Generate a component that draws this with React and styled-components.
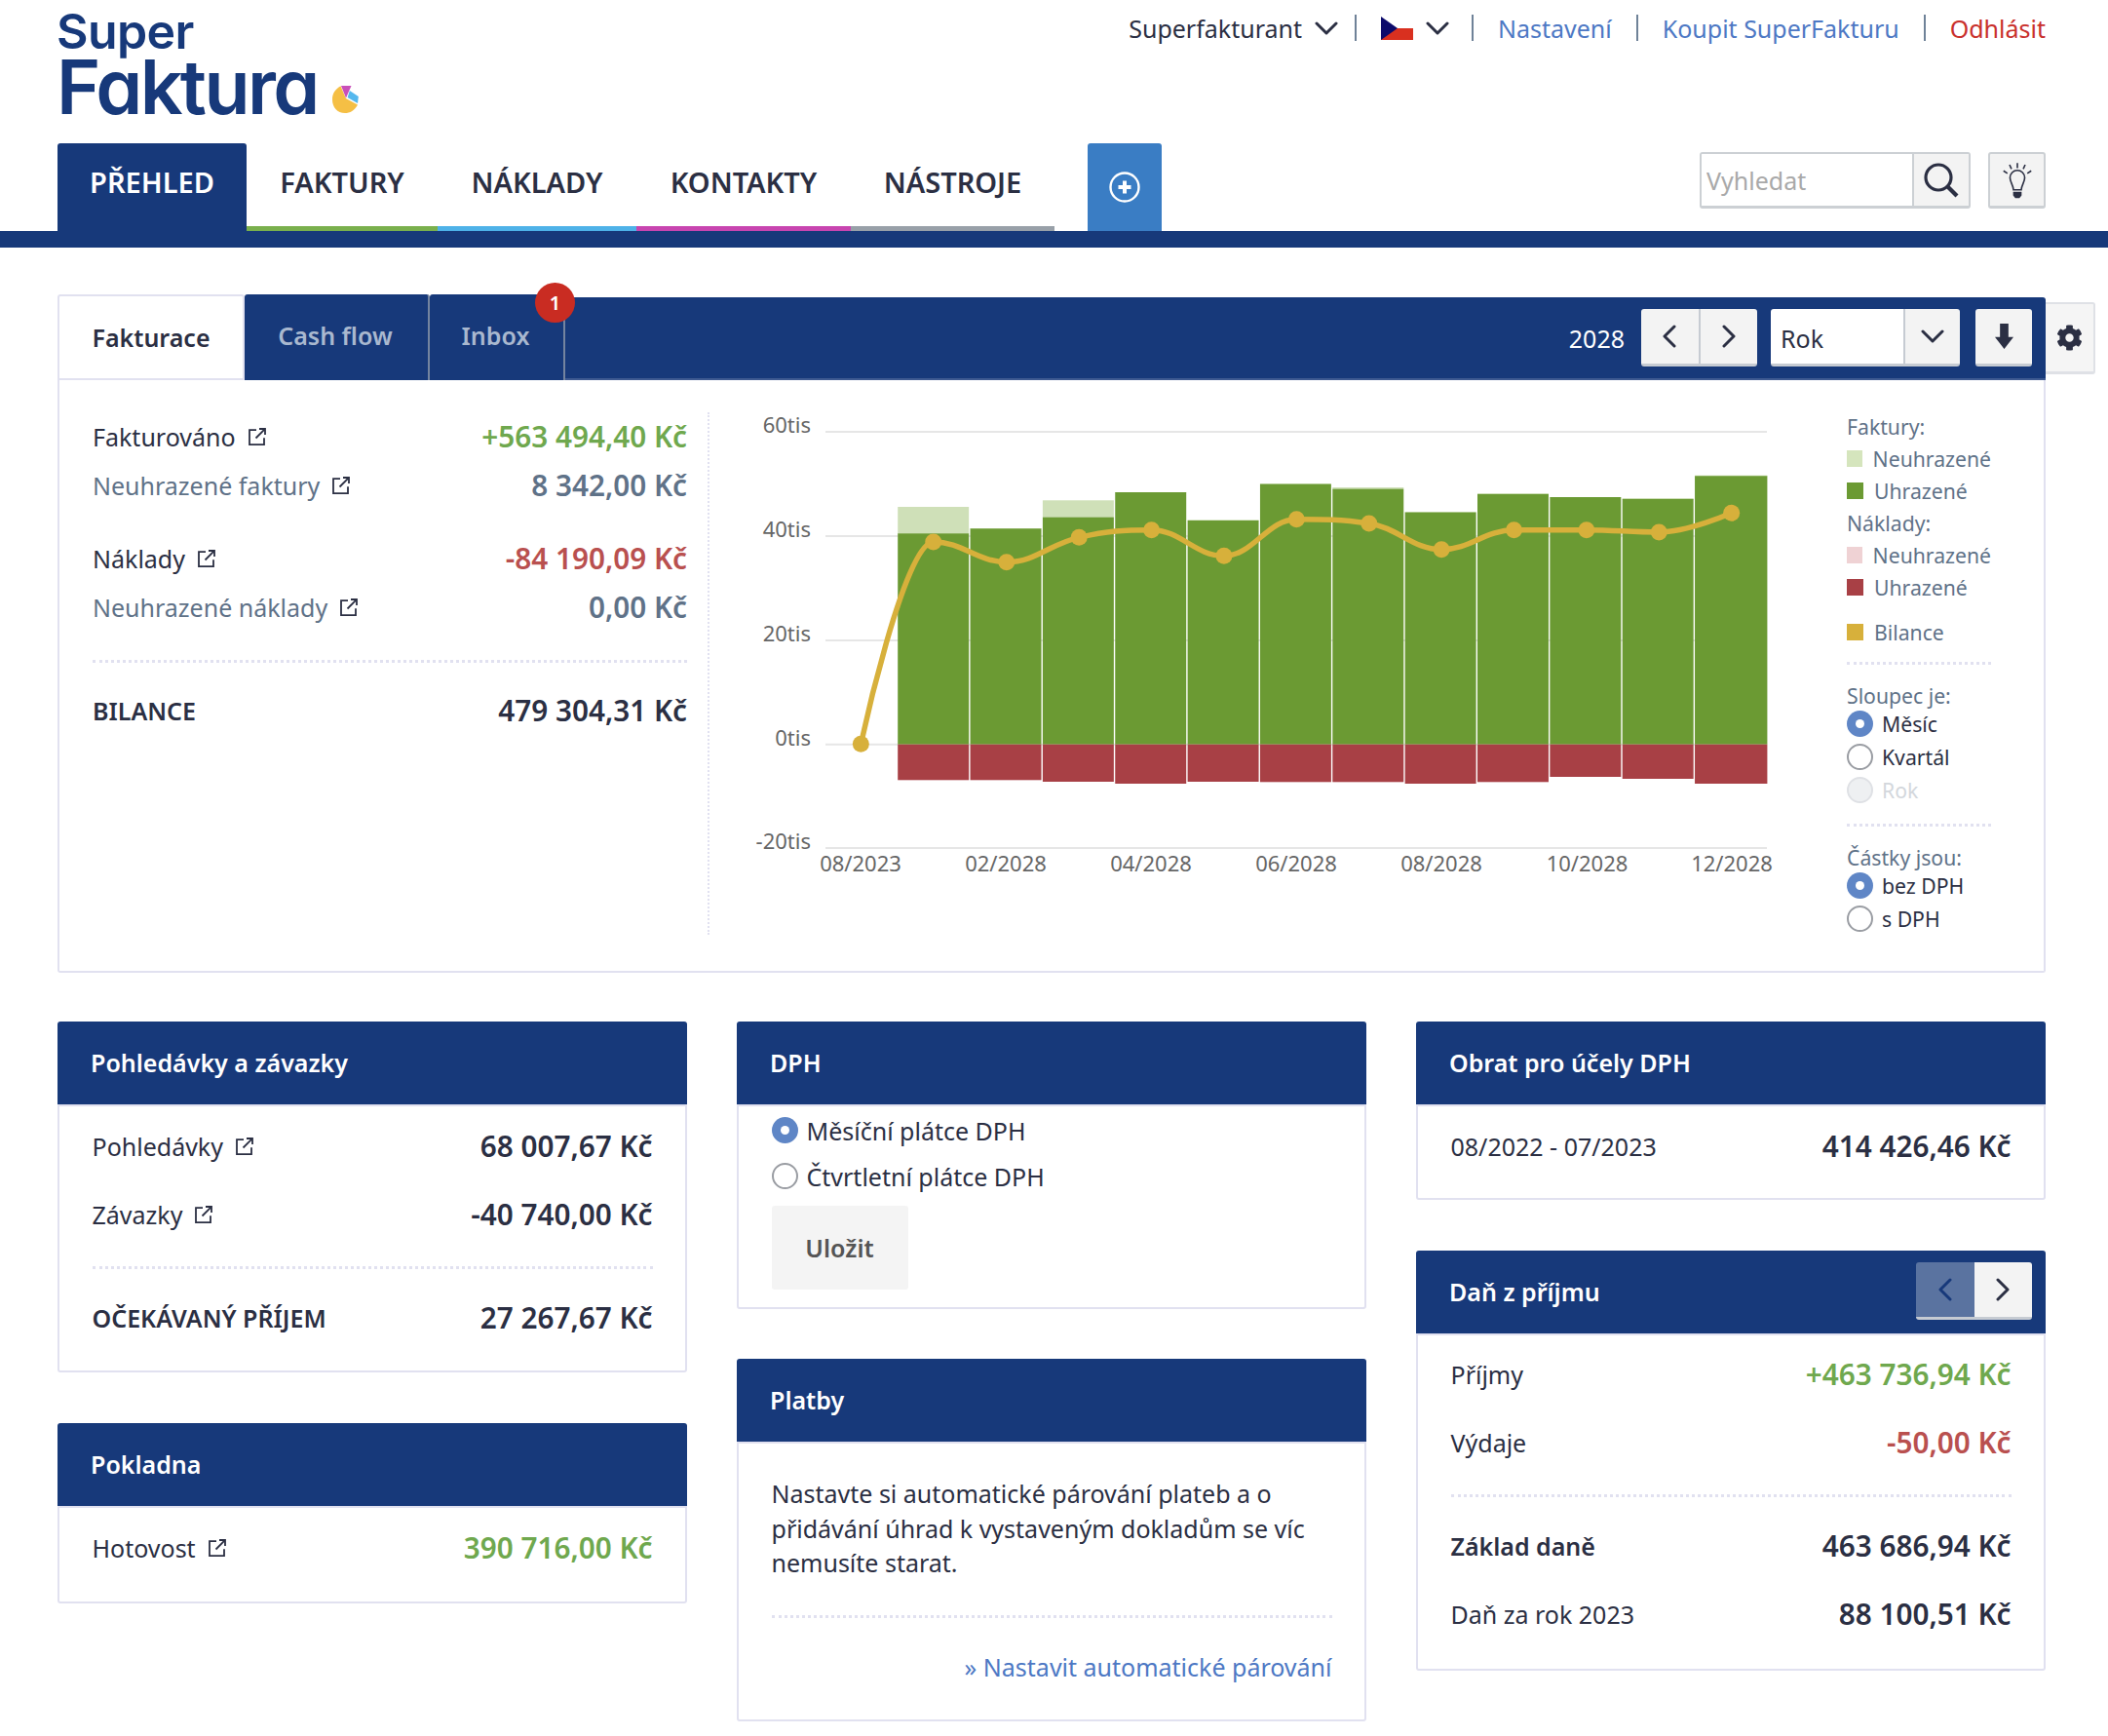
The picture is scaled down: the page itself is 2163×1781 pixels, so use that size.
import React from "react";
import styled, { createGlobalStyle } from "styled-components";
import { FaCog } from "react-icons/fa";

const NAVY = "#17397a";
const INK = "#2b2f43";
const SLATE = "#5f7288";
const LINE = "#e1e1f0";
const FONT = `"Noto Sans", "Open Sans", "Liberation Sans", sans-serif`;

const Global = createGlobalStyle`
  html, body { margin: 0; padding: 0; background: #fff; }
  body { font-family: ${FONT}; color: ${INK}; font-size: 25px; }
  * { box-sizing: border-box; }
`;

const Page = styled.div`
  width: 2163px;
  min-height: 1781px;
  background: #fff;
`;

/* ---------- Header ---------- */
const TopBar = styled.header`
  height: 147px;
  padding: 0 64px 0 58px;
  display: flex;
  justify-content: space-between;
  align-items: flex-start;
`;

const Logo = styled.div`
  display: grid;
  grid-template-columns: auto auto;
  align-items: end;
  column-gap: 14px;
  padding-top: 3px;
  color: ${NAVY};
  font-family: Inter, "Liberation Sans", sans-serif;
  font-feature-settings: "cv11" 1;
  font-weight: 600;
`;
const LogoSuper = styled.div`
  grid-column: 1 / span 2;
  font-size: 50px;
  line-height: 58px;
  letter-spacing: -0.6px;
`;
const LogoFaktura = styled.div`
  font-size: 77px;
  line-height: 56px;
  letter-spacing: -2.6px;
`;
const LogoPie = styled.svg`
  width: 30px;
  height: 30px;
`;

const TopLinks = styled.nav`
  display: flex;
  align-items: center;
  gap: 25px;
  height: 27px;
  margin-top: 15px;
  font-size: 25px;
  white-space: nowrap;
`;
const TopItem = styled.a`
  display: inline-flex;
  align-items: center;
  gap: 13px;
  margin-right: ${(p) => p.$trim || 0}px;
  color: ${(p) => p.$color || INK};
`;
const TopSep = styled.span`
  width: 2px;
  height: 27px;
  background: #6f8298;
`;
const Flag = styled.svg`
  width: 33px;
  height: 24px;
  display: block;
`;

const NavBar = styled.div`
  height: 107px;
  padding: 0 64px 0 59px;
  border-bottom: 17px solid ${NAVY};
  display: flex;
  align-items: stretch;
`;
const NavItem = styled.a`
  width: ${(p) => p.$w}px;
  height: 90px;
  display: flex;
  justify-content: center;
  align-items: flex-start;
  padding-top: 20px;
  line-height: 40px;
  font-size: 29px;
  font-weight: 600;
  text-transform: uppercase;
  color: ${(p) => (p.$active ? "#fff" : INK)};
  background: ${(p) => (p.$active ? NAVY : "transparent")};
  border-bottom: 5px solid ${(p) => p.$line || NAVY};
  border-radius: ${(p) => (p.$active ? "3px 3px 0 0" : "0")};
`;
const AddButton = styled.button`
  width: 76px;
  height: 90px;
  margin-left: 34px;
  border: 0;
  padding: 0;
  border-radius: 3px 3px 0 0;
  background: #3a7dc4;
  display: flex;
  align-items: center;
  justify-content: center;
`;
const NavTools = styled.div`
  margin-left: auto;
  padding-top: 9px;
  display: flex;
  align-items: flex-start;
  gap: 18px;
`;
const SearchBox = styled.div`
  width: 278px;
  height: 58px;
  display: flex;
  border: 2px solid #ccd0d4;
  border-bottom-width: 3px;
  border-radius: 3px;
  overflow: hidden;
`;
const SearchField = styled.input`
  flex: 1;
  min-width: 0;
  border: 0;
  outline: 0;
  padding: 0 0 0 5px;
  font: 25px ${FONT};
  color: ${INK};
  &::placeholder { color: #a9a9a9; opacity: 1; }
`;
const SearchButton = styled.span`
  width: 58px;
  background: #f3f3f3;
  border-left: 2px solid #ccd0d4;
  display: flex;
  align-items: center;
  justify-content: center;
`;
const HintButton = styled.span`
  width: 59px;
  height: 58px;
  background: #f3f3f3;
  border: 2px solid #ccd0d4;
  border-bottom-width: 3px;
  border-radius: 3px;
  display: flex;
  align-items: center;
  justify-content: center;
`;

/* ---------- Overview panel ---------- */
const Main = styled.main`
  padding: 51px 64px 0 59px;
`;
const Overview = styled.section`
  position: relative;
`;
const TabBar = styled.div`
  height: 85px;
  background: ${NAVY};
  border-radius: 0 3px 0 0;
  border-bottom: 2px solid #3f5a91;
  display: flex;
  align-items: flex-end;
`;
const Tab = styled.a`
  position: relative;
  width: ${(p) => p.$w}px;
  height: 88px;
  margin-bottom: -2px;
  display: flex;
  align-items: center;
  justify-content: center;
  padding-bottom: ${(p) => (p.$active ? "0" : "5px")};
  padding-right: ${(p) => (p.$active ? "0" : "2px")};
  font-size: 25px;
  font-weight: 600;
  color: ${(p) => (p.$active ? INK : "#a9b8cf")};
  background: ${(p) => (p.$active ? "#fff" : NAVY)};
  border: ${(p) => (p.$active ? `2px solid ${LINE}` : "0")};
  border-right: ${(p) => (p.$active ? `2px solid ${LINE}` : "2px solid #74849f")};
  border-radius: 3px 3px 0 0;
`;
const Badge = styled.span`
  position: absolute;
  top: -12px;
  right: -12px;
  width: 41px;
  height: 41px;
  border-radius: 50%;
  background: #c92c22;
  color: #fff;
  font-size: 20px;
  font-weight: 600;
  display: flex;
  align-items: center;
  justify-content: center;
`;
const Controls = styled.div`
  margin-left: auto;
  align-self: center;
  padding-right: 14px;
  display: flex;
  align-items: center;
  gap: 14px;
`;
const YearLabel = styled.span`
  color: #fff;
  font-size: 25px;
  margin-right: 3px;
`;
const ButtonGroup = styled.div`
  display: flex;
  width: ${(p) => p.$w || 119}px;
  height: 59px;
  border-radius: 3px;
  overflow: hidden;
  border-bottom: 3px solid #c6cbd2;
`;
const SelectGroup = styled(ButtonGroup)`
  margin-right: 2px;
`;
const IconButton = styled.span`
  flex: 1;
  background: ${(p) => (p.$disabled ? "#5a73a0" : "#f3f3f3")};
  border-left: ${(p) => (p.$divided ? "2px solid #c6cbd2" : "0")};
  display: flex;
  align-items: center;
  justify-content: center;
`;
const SelectText = styled.span`
  width: 136px;
  flex: none;
  background: #fff;
  padding: 4px 0 0 10px;
  display: flex;
  align-items: center;
  font-size: 25px;
  color: ${INK};
`;
const SelectArrow = styled(IconButton)`
  border-left: 2px solid #c6cbd2;
`;
const GearTab = styled.span`
  position: absolute;
  top: 5px;
  right: -51px;
  width: 51px;
  height: 74px;
  background: #f5f5f5;
  border: 2px solid #dfe1e6;
  border-left: 0;
  border-bottom-width: 3px;
  border-radius: 0 3px 3px 0;
  display: flex;
  align-items: center;
  justify-content: center;
  color: ${INK};
`;
const PanelBody = styled.div`
  height: 608px;
  border: 2.5px solid ${LINE};
  border-top: 0;
  border-radius: 0 0 3px 3px;
  display: flex;
  align-items: flex-start;
`;
const Stats = styled.div`
  width: 667px;
  height: 536px;
  margin-top: 33px;
  padding: 0 21px 0 34px;
  border-right: 2px dotted ${LINE};
`;
const StatRow = styled.div`
  height: ${(p) => p.$h || 50}px;
  display: flex;
  align-items: center;
  justify-content: space-between;
  margin-top: ${(p) => p.$gap || 0}px;
  white-space: nowrap;
`;
const StatLabel = styled.span`
  display: inline-flex;
  align-items: center;
  gap: 13px;
  font-size: 25px;
  font-weight: ${(p) => (p.$strong ? 600 : 400)};
  color: ${(p) => (p.$muted ? SLATE : INK)};
`;
const Amount = styled.span`
  font-size: 29.7px;
  font-weight: 600;
  margin-bottom: 2px;
  color: ${(p) => (p.$tone === "green" ? "#6fa84e" : p.$tone === "red" ? "#b9504f" : p.$tone === "slate" ? SLATE : INK)};
`;
const Dotted = styled.div`
  border-top: 3px dotted ${LINE};
  margin: ${(p) => p.$top || 0}px 0 ${(p) => p.$bottom || 0}px;
`;
const ChartSvg = styled.svg`
  flex: none;
  width: 1100px;
  height: 540px;
  margin: 9.5px 0 0 22px;
  display: block;
`;
const AxisText = styled.text`
  font-family: ${FONT};
  font-size: 22px;
  fill: #666;
`;
const Legend = styled.aside`
  width: 148px;
  margin: 31px 0 0 45px;
  font-size: 21.2px;
  color: ${SLATE};
`;
const LegendTitle = styled.div`
  height: 33px;
  line-height: 33px;
  margin-bottom: ${(p) => (p.$tight ? -4 : 0)}px;
`;
const LegendItem = styled.div`
  height: 33px;
  margin-top: ${(p) => p.$gap || 0}px;
  display: flex;
  align-items: center;
  gap: 11px;
  white-space: nowrap;
`;
const Swatch = styled.i`
  width: 17px;
  height: 17px;
  background: ${(p) => p.$c};
`;
const RadioRow = styled.label`
  height: ${(p) => p.$h || 34}px;
  display: flex;
  align-items: center;
  gap: ${(p) => p.$gap || 9}px;
  font-size: ${(p) => p.$size || 21.2}px;
  color: ${(p) => (p.$disabled ? "#d3d7dc" : INK)};
  white-space: nowrap;
`;
const Radio = styled.span`
  flex: none;
  width: 27px;
  height: 27px;
  border-radius: 50%;
  background: ${(p) => (p.$on ? "#5f86c6" : p.$disabled ? "#eef0f2" : "#fff")};
  border: ${(p) => (p.$on ? "0" : p.$disabled ? "2px solid #dfe1e5" : "2px solid #9a9da3")};
  display: flex;
  align-items: center;
  justify-content: center;
  &::after {
    content: "";
    display: ${(p) => (p.$on ? "block" : "none")};
    width: 9px;
    height: 9px;
    border-radius: 50%;
    background: #fff;
  }
`;

/* ---------- Cards ---------- */
const CardGrid = styled.div`
  margin-top: 50px;
  display: grid;
  grid-template-columns: repeat(3, 646px);
  column-gap: 51px;
  align-items: start;
`;
const Column = styled.div`
  display: flex;
  flex-direction: column;
  gap: ${(p) => p.$gap || 52}px;
`;
const Card = styled.article`
  display: flex;
  flex-direction: column;
`;
const CardHead = styled.header`
  height: 85px;
  padding: 0 14px 2px 34px;
  background: ${NAVY};
  border-radius: 3px 3px 0 0;
  display: flex;
  align-items: center;
  justify-content: space-between;
  color: #fff;
  font-size: 25px;
  font-weight: 600;
`;
const CardBody = styled.div`
  border: 2.5px solid ${LINE};
  border-radius: 0 0 3px 3px;
  padding: ${(p) => p.$pad || "6px 33.5px 19px"};
`;
const ValueRow = styled.div`
  height: 70px;
  display: flex;
  align-items: center;
  justify-content: space-between;
  white-space: nowrap;
`;
const SaveButton = styled.button`
  display: block;
  width: 140px;
  height: 86px;
  margin-top: 7px;
  border: 0;
  border-radius: 3px;
  background: #f4f4f4;
  color: #555;
  font: 600 25px ${FONT};
`;
const Paragraph = styled.p`
  margin: 0;
  width: 574px;
  line-height: 35.7px;
  font-size: 25px;
  color: ${INK};
`;
const ActionLink = styled.a`
  display: block;
  margin-top: 32px;
  line-height: 36px;
  text-align: right;
  font-size: 25px;
  color: #4d78c4;
`;

/* ---------- Icons ---------- */
const ExternalIcon = () => (
  <svg width="18" height="18" viewBox="0 0 18 18" fill="none" stroke={INK} strokeWidth="1.8">
    <path d="M8 2.2H1v15h15v-7" />
    <path d="M7.5 10.5 16.6 1.4" />
    <path d="M11 1h6v6" />
  </svg>
);
const Chevron = ({ dir = "down", color = INK, size = 24 }) => {
  const d = { down: "M2 7l10 10 10-10", left: "M17 2 7 12l10 10", right: "M7 2l10 10-10 10" }[dir];
  return (
    <svg width={size} height={size} viewBox="0 0 24 24" fill="none" stroke={color} strokeWidth="3" strokeLinecap="round" strokeLinejoin="round">
      <path d={d} />
    </svg>
  );
};

const LINK = "#4d78c4";

/* ---------- Chart data ---------- */
const ZERO = 363.7;
const BAR_X = 171.2;
const BAR_W = 74.35;
const bars = [
  [147.3, 120, 400.3], [142.3, 142, 400.3], [130.7, 113.3, 402], [105, 105, 404],
  [134, 133.3, 402], [96.7, 96, 402.3], [101.7, 100, 402.3], [125.7, 125, 404],
  [107, 106, 402.3], [110, 110, 397], [112, 111, 399], [88.3, 87.7, 404],
];
const linePts = [
  [190, 1090], [296, 468], [403, 530], [509, 454], [615, 431], [721, 511], [827, 398],
  [933, 411], [1039, 491], [1145, 431], [1251, 431], [1357, 438], [1463, 379],
].map(([x, y]) => [x / 1.425, y / 3]);

function splinePath(pts) {
  const s = 1.5;
  const ctl = pts.map(([x, y], i) => {
    if (i === 0 || i === pts.length - 1) return { lx: x, ly: y, rx: x, ry: y };
    const [px, py] = pts[i - 1];
    const [nx, ny] = pts[i + 1];
    const lx = (s * x + px) / (s + 1);
    let ly = (s * y + py) / (s + 1);
    const rx = (s * x + nx) / (s + 1);
    let ry = (s * y + ny) / (s + 1);
    const c = ((ry - ly) * (rx - x)) / (rx - lx) + y - ry;
    ly += c;
    ry += c;
    if (ly > py && ly > y) { ly = Math.max(py, y); ry = 2 * y - ly; }
    else if (ly < py && ly < y) { ly = Math.min(py, y); ry = 2 * y - ly; }
    if (ry > ny && ry > y) { ry = Math.max(ny, y); ly = 2 * y - ry; }
    else if (ry < ny && ry < y) { ry = Math.min(ny, y); ly = 2 * y - ry; }
    return { lx, ly, rx, ry };
  });
  let d = `M${pts[0][0]} ${pts[0][1]}`;
  for (let i = 1; i < pts.length; i++) {
    d += ` C${ctl[i - 1].rx} ${ctl[i - 1].ry} ${ctl[i].lx} ${ctl[i].ly} ${pts[i][0]} ${pts[i][1]}`;
  }
  return d;
}

const Chart = () => (
  <ChartSvg viewBox="0 0 1100 540">
    {[[43, "60tis"], [150, "40tis"], [257, "20tis"], [363.7, "0tis"], [470, "-20tis"]].map(([y, t]) => (
      <g key={t}>
        <line x1="97" x2="1063" y1={y} y2={y} stroke="#e6e6e6" strokeWidth="2" />
        <AxisText x="82" y={y + 1} textAnchor="end">{t}</AxisText>
      </g>
    ))}
    {bars.map(([paid, unpaid, red], i) => {
      const x = BAR_X + i * BAR_W;
      const w = BAR_W - (i === 11 ? 0 : 1.4);
      return (
        <g key={i}>
          <rect x={x} y={unpaid} width={w} height={paid - unpaid + 0.5} fill="#cfe0b8" />
          <rect x={x} y={paid} width={w} height={ZERO - paid} fill="#6b9a33" />
          <rect x={x} y={ZERO} width={w} height={red - ZERO} fill="#a84045" />
        </g>
      );
    })}
    <path d={splinePath(linePts)} fill="none" stroke="#d7b03b" strokeWidth="5.5" />
    {linePts.map(([x, y], i) => (
      <circle key={i} cx={x} cy={y} r="8.5" fill="#d7b03b" />
    ))}
    {[["08/2023", 133], ["02/2028", 282], ["04/2028", 431], ["06/2028", 580], ["08/2028", 729], ["10/2028", 878.5], ["12/2028", 1027]].map(([t, x]) => (
      <AxisText key={t} x={x} y="494" textAnchor="middle">{t}</AxisText>
    ))}
  </ChartSvg>
);

export default function App() {
  return (
    <Page>
      <Global />
      <TopBar>
        <Logo>
          <LogoSuper>Super</LogoSuper>
          <LogoFaktura>Faktura</LogoFaktura>
          <LogoPie viewBox="0 0 30 30">
            <path d="M9.5 1.3 15 14 27 20.5C24 26.5 19 29 14 29 6 29 1 23 1 15 1 9 4 4.5 9.5 1.3Z" fill="#f5bf45" />
            <path d="M10 1 20.5 1 15 13.5Z" fill="#c94fb9" />
            <path d="M18.8 6 27.8 12 27 19 16.6 13Z" fill="#55b8ee" />
          </LogoPie>
        </Logo>
        <TopLinks>
          <TopItem $trim={-8}>Superfakturant <Chevron /></TopItem>
          <TopSep />
          <TopItem $trim={-2}>
            <Flag viewBox="0 0 33 24">
              <rect width="33" height="12" fill="#fff" />
              <rect y="12" width="33" height="12" fill="#d9301f" />
              <path d="M0 0 17 12 0 24Z" fill="#0c0a6b" />
            </Flag>
            <Chevron />
          </TopItem>
          <TopSep />
          <TopItem $color={LINK}>Nastavení</TopItem>
          <TopSep />
          <TopItem $color={LINK}>Koupit SuperFakturu</TopItem>
          <TopSep />
          <TopItem $color="#c9302c">Odhlásit</TopItem>
        </TopLinks>
      </TopBar>

      <NavBar>
        <NavItem $active $w={194}>Přehled</NavItem>
        <NavItem $w={196} $line="#7ab04d">Faktury</NavItem>
        <NavItem $w={204} $line="#4eb2e8">Náklady</NavItem>
        <NavItem $w={220} $line="#c845b0">Kontakty</NavItem>
        <NavItem $w={209} $line="#98a0a8">Nástroje</NavItem>
        <AddButton aria-label="Přidat">
          <svg width="32" height="32" viewBox="0 0 32 32" fill="none">
            <circle cx="16" cy="16" r="14.5" stroke="#fff" strokeWidth="2.4" />
            <path d="M16 9.5v13M9.5 16h13" stroke="#fff" strokeWidth="4" />
          </svg>
        </AddButton>
        <NavTools>
          <SearchBox>
            <SearchField placeholder="Vyhledat" />
            <SearchButton>
              <svg width="38" height="38" viewBox="0 0 38 38" fill="none" stroke={INK} strokeWidth="3.2">
                <circle cx="16" cy="16" r="13" />
                <path d="M25.5 25.5 35 35" strokeWidth="4.2" />
              </svg>
            </SearchButton>
          </SearchBox>
          <HintButton>
            <svg width="32" height="38" viewBox="0 0 36 42" fill="none" stroke={INK} strokeWidth="1.8">
              <path d="M18 1v6M9 3l2.2 5M27 3l-2.2 5M2 10l4.5 3M34 10l-4.5 3" />
              <path d="M13.5 32c0-5-4-9-4-14a8.5 8.5 0 0 1 17 0c0 5-4 9-4 14Z" />
              <path d="M14 35h8v3l-2 2.5h-4L14 38Z" fill={INK} />
            </svg>
          </HintButton>
        </NavTools>
      </NavBar>

      <Main>
        <Overview>
          <TabBar>
            <Tab $active $w={192}>Fakturace</Tab>
            <Tab $w={190}>Cash flow</Tab>
            <Tab $w={139}>Inbox<Badge>1</Badge></Tab>
            <Controls>
              <YearLabel>2028</YearLabel>
              <ButtonGroup>
                <IconButton><Chevron dir="left" /></IconButton>
                <IconButton $divided><Chevron dir="right" /></IconButton>
              </ButtonGroup>
              <SelectGroup $w={194}>
                <SelectText>Rok</SelectText>
                <SelectArrow><Chevron /></SelectArrow>
              </SelectGroup>
              <ButtonGroup $w={58}>
                <IconButton>
                  <svg width="21" height="26" viewBox="0 0 22 30" fill={INK}>
                    <path d="M6 0h10v16h6L11 30 0 16h6Z" />
                  </svg>
                </IconButton>
              </ButtonGroup>
            </Controls>
          </TabBar>
          <GearTab><FaCog size={27} /></GearTab>
          <PanelBody>
            <Stats>
              <StatRow>
                <StatLabel>Fakturováno <ExternalIcon /></StatLabel>
                <Amount $tone="green">+563 494,40 Kč</Amount>
              </StatRow>
              <StatRow>
                <StatLabel $muted>Neuhrazené faktury <ExternalIcon /></StatLabel>
                <Amount $tone="slate">8 342,00 Kč</Amount>
              </StatRow>
              <StatRow $gap={25}>
                <StatLabel>Náklady <ExternalIcon /></StatLabel>
                <Amount $tone="red">-84 190,09 Kč</Amount>
              </StatRow>
              <StatRow>
                <StatLabel $muted>Neuhrazené náklady <ExternalIcon /></StatLabel>
                <Amount $tone="slate">0,00 Kč</Amount>
              </StatRow>
              <Dotted $top={29} $bottom={24} />
              <StatRow>
                <StatLabel $strong>BILANCE</StatLabel>
                <Amount>479 304,31 Kč</Amount>
              </StatRow>
            </Stats>
            <Chart />
            <Legend>
              <LegendTitle>Faktury:</LegendTitle>
              <LegendItem><Swatch $c="#d5e5bd" />Neuhrazené</LegendItem>
              <LegendItem><Swatch $c="#6b9a33" />Uhrazené</LegendItem>
              <LegendTitle>Náklady:</LegendTitle>
              <LegendItem><Swatch $c="#efd2d4" />Neuhrazené</LegendItem>
              <LegendItem><Swatch $c="#a84045" />Uhrazené</LegendItem>
              <LegendItem $gap={12.5}><Swatch $c="#d7b03b" />Bilance</LegendItem>
              <Dotted $top={14} $bottom={15} />
              <LegendTitle $tight>Sloupec je:</LegendTitle>
              <RadioRow><Radio $on />Měsíc</RadioRow>
              <RadioRow><Radio />Kvartál</RadioRow>
              <RadioRow $disabled><Radio $disabled />Rok</RadioRow>
              <Dotted $top={17} $bottom={15} />
              <LegendTitle $tight>Částky jsou:</LegendTitle>
              <RadioRow><Radio $on />bez DPH</RadioRow>
              <RadioRow><Radio />s DPH</RadioRow>
            </Legend>
          </PanelBody>
        </Overview>

        <CardGrid>
          <Column>
            <Card>
              <CardHead>Pohledávky a závazky</CardHead>
              <CardBody>
                <ValueRow>
                  <StatLabel>Pohledávky <ExternalIcon /></StatLabel>
                  <Amount>68 007,67 Kč</Amount>
                </ValueRow>
                <ValueRow>
                  <StatLabel>Závazky <ExternalIcon /></StatLabel>
                  <Amount>-40 740,00 Kč</Amount>
                </ValueRow>
                <Dotted $top={18} $bottom={15} />
                <ValueRow>
                  <StatLabel $strong>OČEKÁVANÝ PŘÍJEM</StatLabel>
                  <Amount>27 267,67 Kč</Amount>
                </ValueRow>
              </CardBody>
            </Card>
            <Card>
              <CardHead>Pokladna</CardHead>
              <CardBody $pad="6px 33.5px 20px">
                <ValueRow>
                  <StatLabel>Hotovost <ExternalIcon /></StatLabel>
                  <Amount $tone="green">390 716,00 Kč</Amount>
                </ValueRow>
              </CardBody>
            </Card>
          </Column>

          <Column $gap={51}>
            <Card>
              <CardHead>DPH</CardHead>
              <CardBody $pad="1px 33.5px 18px">
                <RadioRow $h={47} $size={25} $gap={9}><Radio $on />Měsíční plátce DPH</RadioRow>
                <RadioRow $h={47} $size={25} $gap={9}><Radio />Čtvrtletní plátce DPH</RadioRow>
                <SaveButton>Uložit</SaveButton>
              </CardBody>
            </Card>
            <Card>
              <CardHead>Platby</CardHead>
              <CardBody $pad="34px 33.5px 36px">
                <Paragraph>
                  Nastavte si automatické párování plateb a o přidávání úhrad k vystaveným dokladům se víc nemusíte starat.
                </Paragraph>
                <Dotted $top={35} />
                <ActionLink>» Nastavit automatické párování</ActionLink>
              </CardBody>
            </Card>
          </Column>

          <Column>
            <Card>
              <CardHead>Obrat pro účely DPH</CardHead>
              <CardBody $pad="6px 33.5px 18px">
                <ValueRow>
                  <StatLabel>08/2022 - 07/2023</StatLabel>
                  <Amount>414 426,46 Kč</Amount>
                </ValueRow>
              </CardBody>
            </Card>
            <Card>
              <CardHead>
                Daň z příjmu
                <ButtonGroup>
                  <IconButton $disabled><Chevron dir="left" color={NAVY} /></IconButton>
                  <IconButton><Chevron dir="right" /></IconButton>
                </ButtonGroup>
              </CardHead>
              <CardBody $pad="5px 33.5px 21px">
                <ValueRow>
                  <StatLabel>Příjmy</StatLabel>
                  <Amount $tone="green">+463 736,94 Kč</Amount>
                </ValueRow>
                <ValueRow>
                  <StatLabel>Výdaje</StatLabel>
                  <Amount $tone="red">-50,00 Kč</Amount>
                </ValueRow>
                <Dotted $top={18} $bottom={15} />
                <ValueRow>
                  <StatLabel $strong>Základ daně</StatLabel>
                  <Amount>463 686,94 Kč</Amount>
                </ValueRow>
                <ValueRow>
                  <StatLabel>Daň za rok 2023</StatLabel>
                  <Amount>88 100,51 Kč</Amount>
                </ValueRow>
              </CardBody>
            </Card>
          </Column>
        </CardGrid>
      </Main>
    </Page>
  );
}
